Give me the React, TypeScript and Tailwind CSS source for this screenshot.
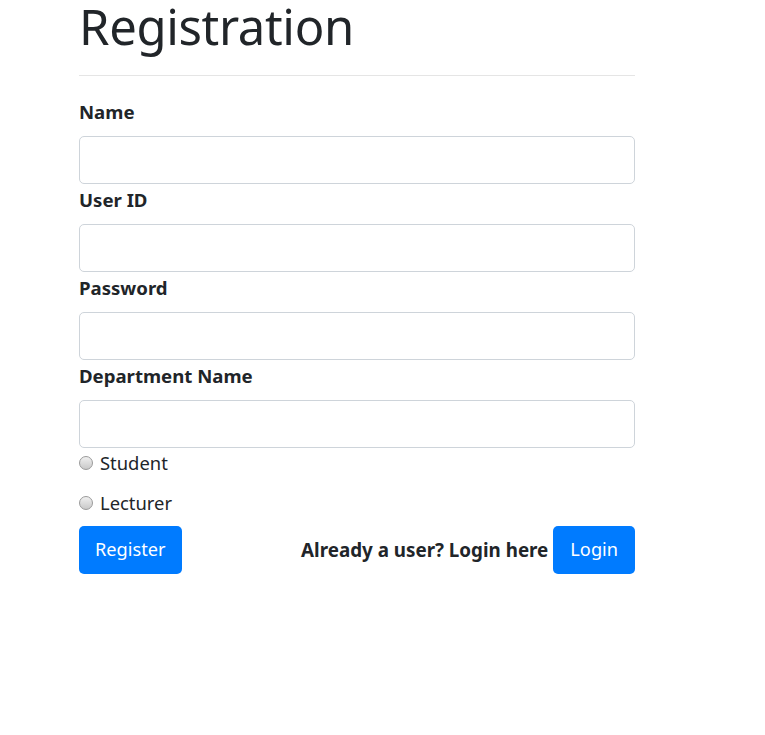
export default function App() {
  const fields = ['Name', 'User ID', 'Password', 'Department Name']

  return (
    <div className="min-h-[735px] bg-white text-[#212529] font-['Noto_Sans',sans-serif]">
      <div className="ml-[79px] w-[556px]">
        <h1 className="text-[49px] leading-[52px] font-normal pb-[23px] border-b border-[#e5e5e5] tracking-[-0.35px]">
          Registration
        </h1>
        <form className="mt-[23px] flex flex-col">
          {fields.map((f, i) => (
            <div key={f} className={i === 0 ? '' : 'mt-[3px]'}>
              <label className="block text-[18.6px] leading-[26px] font-bold mb-[11px]">{f}</label>
              <input
                type={f === 'Password' ? 'password' : 'text'}
                className="block w-full h-[48px] border border-[#ced4da] rounded-[5px] px-4 text-[20px] outline-none"
              />
            </div>
          ))}
          <div className="mt-[2px] flex flex-col gap-[14px]">
            {['Student', 'Lecturer'].map((r) => (
              <label key={r} className="flex items-center gap-[7px] text-[18.4px] leading-[26px]">
                <span className="w-[14px] h-[14px] rounded-full border border-[#9a9a9a] bg-gradient-to-b from-[#f0f0f0] to-[#c9c9c9]" />
                {r}
              </label>
            ))}
          </div>
          <div className="mt-[10px] flex items-center justify-between">
            <button
              type="button"
              className="h-[48px] px-[16px] rounded-[5px] bg-[#007bff] text-white text-[18.2px]"
            >
              Register
            </button>
            <div className="flex items-center gap-[5px]">
              <span className="text-[18.8px] font-bold">Already a user? Login here</span>
              <button
                type="button"
                className="h-[48px] px-[17px] rounded-[5px] bg-[#007bff] text-white text-[18.2px]"
              >
                Login
              </button>
            </div>
          </div>
        </form>
      </div>
    </div>
  )
}
